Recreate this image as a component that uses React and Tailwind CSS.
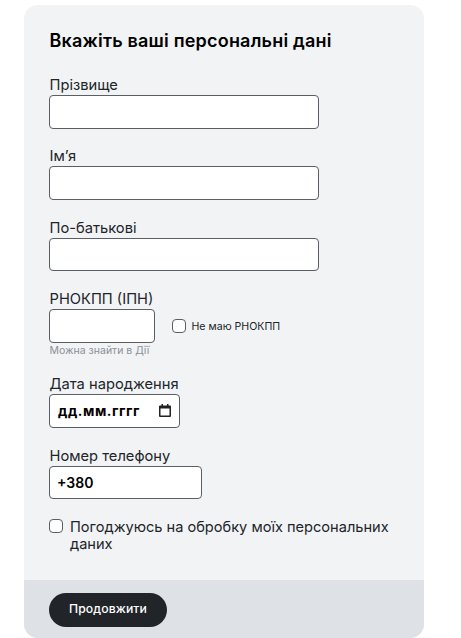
import React from 'react';

const font = "font-['Inter','Noto_Sans',sans-serif]";
const inputClass = 'block h-[33.5px] rounded-[4px] border border-[#5a5f66] bg-white px-[7px] text-[14px] font-semibold text-black outline-none';
const labelClass = 'block h-[21px] pl-[0.5px] text-[14.7px] leading-[23px] text-[#212529]';

const Field = ({ label, className }) => (
  <div className="mb-[16.9px]">
    <label className={labelClass}>{label}</label>
    <input type="text" className={`${inputClass} ${className}`} />
  </div>
);

const CalendarIcon = () => (
  <svg width="12" height="13" viewBox="0 0 12 13" className="text-[#222]">
    <path
      fill="currentColor"
      fillRule="evenodd"
      d="M2.500 0h1.500v1.500h4V0h1.500v1.500h1.500a1 1 0 0 1 1 1v9.500a1 1 0 0 1-1 1h-10a1 1 0 0 1-1-1V2.500a1 1 0 0 1 1-1h1.500zM1.500 4.500v7h9v-7z"
    />
  </svg>
);

const App = () => {
  return (
    <div className={`${font} min-h-[638px] bg-white pt-[5px] pl-6`}>
      <div className="w-[400px] overflow-hidden rounded-[14px] bg-[#f1f3f5]">
        <div className="px-[25px] pt-[25px] pb-[26.5px]">
          <h1 className="mb-[22px] pl-[0.5px] text-[18px] leading-[22px] font-semibold tracking-[0.2px] text-black">Вкажіть ваші персональні дані</h1>

          <Field label="Прізвище" className="w-[270px]" />
          <Field label="Ім’я" className="w-[270px]" />
          <Field label="По-батькові" className="w-[270px]" />

          <div className="mb-[15.5px]">
            <label className={labelClass}>РНОКПП (ІПН)</label>
            <div className="flex items-center">
              <input type="text" className={`${inputClass} w-[106px]`} />
              <span className="ml-[17px] h-[14px] w-[14px] rounded-[4px] border border-[#5a5f66] bg-white" />
              <span className="mt-[2px] ml-[5.5px] text-[10.600px] text-[#212529]">Не маю РНОКПП</span>
            </div>
            <p className="mt-[1px] pl-[0.5px] text-[10.500px] leading-[14px] text-[#8b9197]">Можна знайти в Дії</p>
          </div>

          <div className="mb-[17px]">
            <label className={labelClass}>Дата народження</label>
            <div className={`${inputClass} flex w-[130.5px] items-center justify-between pr-2 pl-[8px]`}>
              <span className="text-[14px] font-bold tracking-[0.55px]">дд.мм.гггг</span>
              <CalendarIcon />
            </div>
          </div>

          <div className="mb-[19px]">
            <label className={labelClass}>Номер телефону</label>
            <input type="text" defaultValue="+380" className={`${inputClass} w-[152.5px]`} />
          </div>

          <div className="flex items-start">
            <span className="mt-[1px] h-[14px] w-[14px] shrink-0 rounded-[4px] border border-[#5a5f66] bg-white" />
            <span className="mt-[1px] ml-[7px] text-[14.600px] leading-[17px] text-[#212529]">Погоджуюсь на обробку моїх персональних даних</span>
          </div>
        </div>
        <div className="h-[58px] bg-[#dee1e5] px-[25px] pt-[13px]">
          <button className="h-[34px] w-[118px] rounded-full bg-[#212529] pb-[2px] text-[12.200px] font-medium tracking-[0.1px] text-white">Продовжити</button>
        </div>
      </div>
    </div>
  );
};

export default App;
